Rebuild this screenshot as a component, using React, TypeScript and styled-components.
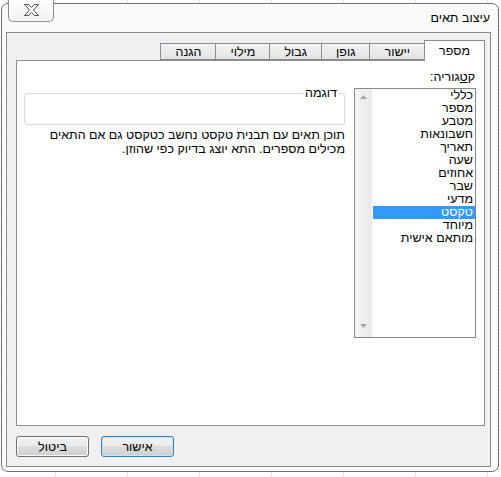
import React from 'react';
import styled, { createGlobalStyle } from 'styled-components';

const GlobalStyle = createGlobalStyle`
  html, body {
    margin: 0;
    padding: 0;
  }
  body {
    width: 501px;
    height: 477px;
    overflow: hidden;
    background-color: #fff;
    background-image:
      linear-gradient(to right, #e2e3e4 1px, transparent 1px),
      linear-gradient(to bottom, #e2e3e4 1px, transparent 1px);
    background-size: 72px 20px;
    background-position: 55px 0, 0 9px;
    font-family: "Liberation Sans", "DejaVu Sans", sans-serif;
    font-size: 12.5px;
    color: #000;
  }
`;

const categories = [
  'כללי',
  'מספר',
  'מטבע',
  'חשבונאות',
  'תאריך',
  'שעה',
  'אחוזים',
  'שבר',
  'מדעי',
  'טקסט',
  'מיוחד',
  'מותאם אישית',
];

const tabs = ['מספר', 'יישור', 'גופן', 'גבול', 'מילוי', 'הגנה'];

const Window = styled.div`
  direction: rtl;
  box-sizing: border-box;
  margin: 3px 0 0 1px;
  width: 498px;
  height: 469px;
  border: 1px solid #6e6e6e;
  border-radius: 7px;
  background: #fafafa;
  padding: 0 7px 4px 4px;
  display: flex;
  flex-direction: column;
`;

const TitleBar = styled.div`
  display: flex;
  align-items: center;
  height: 28px;
  flex-shrink: 0;
`;

const Title = styled.div`
  padding-right: 1px;
  line-height: 14px;
`;

const CloseButton = styled.button`
  align-self: flex-start;
  margin: -5px auto 0 2px;
  width: 46px;
  height: 23px;
  padding: 0;
  border: 1px solid #8e8e8e;
  border-top: none;
  border-radius: 0 0 5px 5px;
  background: linear-gradient(#ffffff, #f1f1f1);
  display: flex;
  align-items: center;
  justify-content: center;
`;

const Frame = styled.div`
  flex: 1;
  display: flex;
  flex-direction: column;
  border: 1px solid #8a8a8a;
  background: #f0f0f0;
  padding: 7px 5px 9px 9px;
`;

const TabRow = styled.div`
  display: flex;
  align-items: flex-end;
  height: 20px;
  flex-shrink: 0;
`;

const Tab = styled.div<{ $active?: boolean }>`
  box-sizing: border-box;
  height: ${p => (p.$active ? '21px' : '17px')};
  margin-bottom: ${p => (p.$active ? '-1px' : '0')};
  margin-left: -1px;
  padding: ${p => (p.$active ? '3px 14px 0' : '1px 14px 0')};
  border: 1px solid #898c95;
  border-bottom: ${p => (p.$active ? 'none' : '1px solid #898c95')};
  background: ${p => (p.$active ? '#fff' : 'linear-gradient(#f3f3f3, #e4e4e4)')};
  position: relative;
  z-index: ${p => (p.$active ? 1 : 0)};
  line-height: 14px;
  text-align: center;
`;

const Panel = styled.div`
  flex: 1;
  display: flex;
  gap: 9px;
  background: #fff;
  border: 1px solid #898c95;
  padding: 9px 8px 0 7px;
`;

const CategoryCol = styled.div`
  width: 122px;
  flex-shrink: 0;
  display: flex;
  flex-direction: column;
`;

const Label = styled.div`
  line-height: 14px;
  margin-bottom: 4px;
  padding-right: 1px;
`;

const ListBox = styled.div`
  box-sizing: border-box;
  height: 250px;
  display: flex;
  border: 1px solid #828790;
  background: #fff;
`;

const Items = styled.div`
  flex: 1;
  display: flex;
  flex-direction: column;
`;

const Item = styled.div<{ $selected?: boolean }>`
  height: 13px;
  line-height: 13px;
  padding-right: 2px;
  margin-left: 1px;
  white-space: nowrap;
  background: ${p => (p.$selected ? '#3399ff' : 'transparent')};
  color: ${p => (p.$selected ? '#fff' : '#000')};
`;

const ScrollBar = styled.div`
  width: 17px;
  flex-shrink: 0;
  display: flex;
  flex-direction: column;
  justify-content: space-between;
  align-items: center;
  background: linear-gradient(to right, #f3f3f3, #eaeaea);
  padding: 6px 0 9px;
  box-sizing: border-box;
`;

const DetailCol = styled.div`
  flex: 1;
  display: flex;
  flex-direction: column;
`;

const Sample = styled.fieldset`
  margin: 16px 0 0;
  padding: 0;
  border: 1px solid #d5dadf;
  border-radius: 3px;
  min-width: 0;
`;

const SampleLegend = styled.legend`
  margin-right: 5px;
  padding: 0 2px;
  line-height: 14px;
`;

const SampleBody = styled.div`
  height: 24px;
`;

const Description = styled.p`
  margin: 3px 0 0;
  line-height: 14px;
`;

const ButtonRow = styled.div`
  display: flex;
  justify-content: flex-end;
  gap: 12px;
  margin-top: 10px;
  flex-shrink: 0;
`;

const Button = styled.button<{ $default?: boolean }>`
  width: 73px;
  height: 21px;
  padding: 0;
  font-family: inherit;
  font-size: 12.5px;
  color: #000;
  border: 1px solid ${p => (p.$default ? '#3c7fb1' : '#707070')};
  border-radius: 3px;
  background: linear-gradient(#f2f2f2 0%, #ebebeb 50%, #dddddd 50%, #cfcfcf 100%);
  box-shadow: inset 0 0 0 1px ${p => (p.$default ? '#c5e5f7' : '#fbfbfb')};
`;

const CloseGlyph = () => (
  <svg width="15" height="12" viewBox="0 0 15 12">
    <polygon
      points="0.5,0.5 4.5,0.5 7.5,3.5 10.5,0.5 14.5,0.5 9.5,6 14.5,11.5 10.5,11.5 7.5,8.5 4.5,11.5 0.5,11.5 5.5,6"
      fill="#ffffff"
      stroke="#4d4d4d"
      strokeWidth="1"
      strokeLinejoin="round"
    />
  </svg>
);

const Arrow = ({ up }: { up?: boolean }) => (
  <svg width="7" height="4" viewBox="0 0 7 4">
    <polygon points={up ? '0,4 3.5,0 7,4' : '0,0 3.5,4 7,0'} fill="#a9a9a9" />
  </svg>
);

export default function App() {
  return (
    <>
      <GlobalStyle />
      <Window>
        <TitleBar>
          <Title>עיצוב תאים</Title>
          <CloseButton aria-label="סגור">
            <CloseGlyph />
          </CloseButton>
        </TitleBar>
        <Frame>
          <TabRow>
            {tabs.map((t, i) => (
              <Tab key={t} $active={i === 0}>{t}</Tab>
            ))}
          </TabRow>
          <Panel>
            <CategoryCol>
              <Label>ק<u>ט</u>גוריה:</Label>
              <ListBox>
                <Items>
                  {categories.map(c => (
                    <Item key={c} $selected={c === 'טקסט'}>{c}</Item>
                  ))}
                </Items>
                <ScrollBar>
                  <Arrow up />
                  <Arrow />
                </ScrollBar>
              </ListBox>
            </CategoryCol>
            <DetailCol>
              <Sample>
                <SampleLegend>דוגמה</SampleLegend>
                <SampleBody />
              </Sample>
              <Description>
                תוכן תאים עם תבנית טקסט נחשב כטקסט גם אם התאים
                <br />
                מכילים מספרים. התא יוצג בדיוק כפי שהוזן.
              </Description>
            </DetailCol>
          </Panel>
          <ButtonRow>
            <Button $default>אישור</Button>
            <Button>ביטול</Button>
          </ButtonRow>
        </Frame>
      </Window>
    </>
  );
}
